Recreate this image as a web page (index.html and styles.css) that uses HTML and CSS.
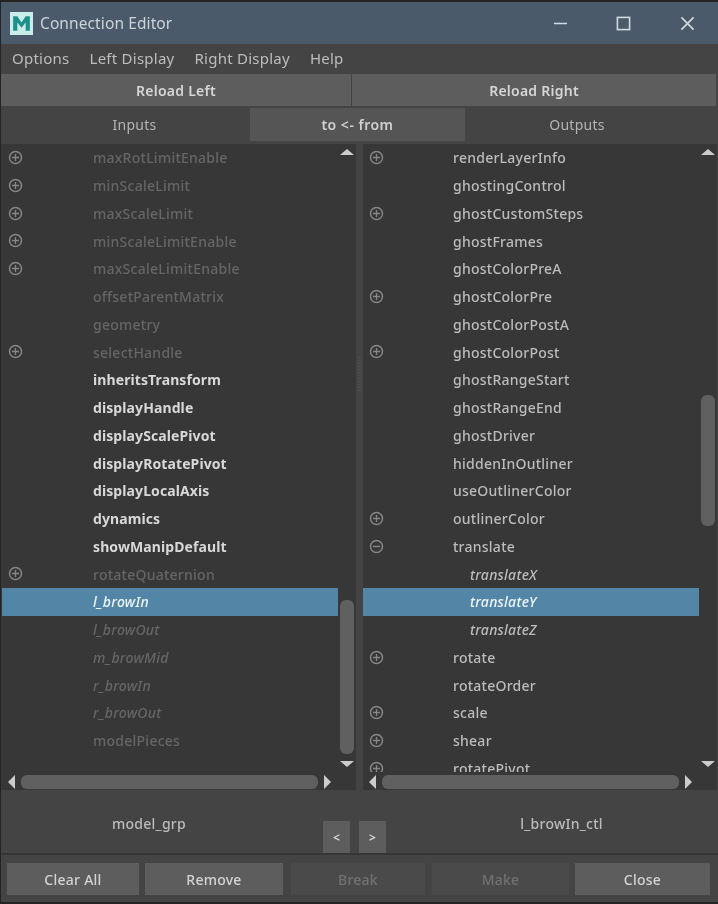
FILE: index.html
```html
<!DOCTYPE html>
<html lang="en">
<head>
<meta charset="utf-8">
<title>Connection Editor</title>
<link rel="stylesheet" href="styles.css">
</head>
<body>
<svg class="defs" width="0" height="0" aria-hidden="true">
  <symbol id="plus" viewBox="0 0 14 14"><circle cx="7" cy="7" r="5.6" fill="none" stroke="currentColor" stroke-width="1.4"/><path d="M3.8 7h6.4M7 3.8v6.4" stroke="currentColor" stroke-width="1.2"/></symbol>
  <symbol id="minus" viewBox="0 0 14 14"><circle cx="7" cy="7" r="5.6" fill="none" stroke="currentColor" stroke-width="1.4"/><path d="M3.8 7h6.4" stroke="currentColor" stroke-width="1.4"/></symbol>
</svg>
<div class="window">
  <header class="titlebar">
    <svg class="logo" viewBox="0 0 22 22"><rect width="22" height="22" fill="#c9eee9"/><path d="M3 18V4h4l4 6 4-6h4v14h-4v-8l-4 5-4-5v8z" fill="#1f8f8c"/></svg>
    <span class="title">Connection Editor</span>
    <div class="controls">
      <svg class="ctl ctl-min" viewBox="0 0 16 16"><path d="M1 8h14" stroke="#d4dbe0" stroke-width="1.6"/></svg>
      <svg class="ctl ctl-max" viewBox="0 0 16 16"><rect x="1.5" y="1.5" width="13" height="13" fill="none" stroke="#d4dbe0" stroke-width="1.7"/></svg>
      <svg class="ctl ctl-close" viewBox="0 0 16 16"><path d="M1.5 1.5l13 13M14.500 1.500l-13 13" stroke="#d4dbe0" stroke-width="1.7"/></svg>
    </div>
  </header>
  <nav class="menubar">
    <span>Options</span><span>Left Display</span><span>Right Display</span><span>Help</span>
  </nav>
  <div class="reload">
    <div class="reload-btn left">Reload Left</div>
    <div class="reload-btn right">Reload Right</div>
  </div>
  <div class="tabs">
    <div class="tab tab-in">Inputs</div>
    <div class="tab tab-mid">to &lt;- from</div>
    <div class="tab tab-out">Outputs</div>
  </div>
  <div class="panes">
    <section class="pane pane-left">
      <div class="rows">
        <div class="row dim"><svg class="ico"><use href="#plus"/></svg><span>maxRotLimitEnable</span></div>
        <div class="row dim"><svg class="ico"><use href="#plus"/></svg><span>minScaleLimit</span></div>
        <div class="row dim"><svg class="ico"><use href="#plus"/></svg><span>maxScaleLimit</span></div>
        <div class="row dim"><svg class="ico"><use href="#plus"/></svg><span>minScaleLimitEnable</span></div>
        <div class="row dim"><svg class="ico"><use href="#plus"/></svg><span>maxScaleLimitEnable</span></div>
        <div class="row dim"><span>offsetParentMatrix</span></div>
        <div class="row dim"><span>geometry</span></div>
        <div class="row dim"><svg class="ico"><use href="#plus"/></svg><span>selectHandle</span></div>
        <div class="row bold"><span>inheritsTransform</span></div>
        <div class="row bold"><span>displayHandle</span></div>
        <div class="row bold"><span>displayScalePivot</span></div>
        <div class="row bold"><span>displayRotatePivot</span></div>
        <div class="row bold"><span>displayLocalAxis</span></div>
        <div class="row bold"><span>dynamics</span></div>
        <div class="row bold"><span>showManipDefault</span></div>
        <div class="row dim"><svg class="ico"><use href="#plus"/></svg><span>rotateQuaternion</span></div>
        <div class="row sel"><span>l_browIn</span></div>
        <div class="row dim ital"><span>l_browOut</span></div>
        <div class="row dim ital"><span>m_browMid</span></div>
        <div class="row dim ital"><span>r_browIn</span></div>
        <div class="row dim ital"><span>r_browOut</span></div>
        <div class="row dim"><span>modelPieces</span></div>
      </div>
      <div class="vbar">
        <i class="arrow up"></i>
        <div class="vtrack"><div class="vthumb thumb-left"></div></div>
        <i class="arrow down"></i>
      </div>
      <div class="hbar">
        <i class="arrow lt"></i>
        <div class="hthumb"></div>
        <i class="arrow rt"></i>
      </div>
    </section>
    <div class="sash"><div class="grip"></div></div>
    <section class="pane pane-right">
      <div class="rows">
        <div class="row"><svg class="ico"><use href="#plus"/></svg><span>renderLayerInfo</span></div>
        <div class="row"><span>ghostingControl</span></div>
        <div class="row"><svg class="ico"><use href="#plus"/></svg><span>ghostCustomSteps</span></div>
        <div class="row"><span>ghostFrames</span></div>
        <div class="row"><span>ghostColorPreA</span></div>
        <div class="row"><svg class="ico"><use href="#plus"/></svg><span>ghostColorPre</span></div>
        <div class="row"><span>ghostColorPostA</span></div>
        <div class="row"><svg class="ico"><use href="#plus"/></svg><span>ghostColorPost</span></div>
        <div class="row"><span>ghostRangeStart</span></div>
        <div class="row"><span>ghostRangeEnd</span></div>
        <div class="row"><span>ghostDriver</span></div>
        <div class="row"><span>hiddenInOutliner</span></div>
        <div class="row"><span>useOutlinerColor</span></div>
        <div class="row"><svg class="ico"><use href="#plus"/></svg><span>outlinerColor</span></div>
        <div class="row"><svg class="ico"><use href="#minus"/></svg><span>translate</span></div>
        <div class="row child"><span>translateX</span></div>
        <div class="row child sel"><span>translateY</span></div>
        <div class="row child"><span>translateZ</span></div>
        <div class="row"><svg class="ico"><use href="#plus"/></svg><span>rotate</span></div>
        <div class="row"><span>rotateOrder</span></div>
        <div class="row"><svg class="ico"><use href="#plus"/></svg><span>scale</span></div>
        <div class="row"><svg class="ico"><use href="#plus"/></svg><span>shear</span></div>
        <div class="row"><svg class="ico"><use href="#plus"/></svg><span>rotatePivot</span></div>
      </div>
      <div class="vbar">
        <i class="arrow up"></i>
        <div class="vtrack"><div class="vthumb thumb-right"></div></div>
        <i class="arrow down"></i>
      </div>
      <div class="hbar">
        <i class="arrow lt"></i>
        <div class="hthumb"></div>
        <i class="arrow rt"></i>
      </div>
    </section>
  </div>
  <div class="status">
    <div class="node node-left">model_grp</div>
    <div class="swap"><div class="swap-btn">&lt;</div><div class="swap-btn">&gt;</div></div>
    <div class="node node-right">l_browIn_ctl</div>
  </div>
  <footer class="actions">
    <div class="btn b-clear">Clear All</div>
    <div class="btn b-remove">Remove</div>
    <div class="btn b-break off">Break</div>
    <div class="btn b-make off">Make</div>
    <div class="btn b-close">Close</div>
  </footer>
</div>
</body>
</html>
```
FILE: styles.css
```css
* { box-sizing: border-box; }
html, body { margin: 0; padding: 0; background: #222; }
.defs { position: absolute; }
.window {
  width: 718px;
  height: 904px;
  padding: 2px 2px 2px 1px;
  background: #242424;
  display: flex;
  flex-direction: column;
  font-family: "Noto Sans", "Open Sans", "Liberation Sans", sans-serif;
  font-size: 14px;
  letter-spacing: 0.25px;
  color: #c2c2c2;
  filter: blur(0.6px);
  overflow: hidden;
}
.titlebar {
  height: 42px;
  flex: none;
  background: #4a5a6b;
  display: flex;
  align-items: center;
  padding-left: 9px;
  margin-right: -2px;
}
.logo { width: 23px; height: 23px; flex: none; }
.title { margin-left: 7px; font-size: 15.500px; letter-spacing: 0.1px; color: #ccd3d8; }
.controls { margin-left: auto; display: flex; align-items: center; padding-right: 23px; }
.ctl { width: 15px; height: 15px; display: block; }
.ctl-max { margin-left: 48px; }
.ctl-close { margin-left: 49px; }
.menubar {
  height: 30px;
  flex: none;
  background: #444;
  display: flex;
  align-items: center;
  gap: 20px;
  padding: 0 0 3px 11px;
  margin-right: -2px;
  font-size: 15px;
  color: #bdbdbd;
}
.reload { height: 34px; flex: none; background: #444; display: flex; margin-right: -2px; padding: 0 2px 2px 0; }
.reload-btn {
  background: #5d5d5d;
  display: flex;
  align-items: center;
  justify-content: center;
  font-weight: 600;
  color: #d6d6d6;
}
.reload-btn.left { width: 350px; margin-right: 1px; }
.reload-btn.right { flex: 1; }
.tabs { height: 36px; flex: none; background: #444; display: flex; padding-bottom: 3px; margin-right: -2px; }
.tab { display: flex; align-items: center; justify-content: center; }
.tab-in { width: 249px; padding-left: 18px; color: #b4b4b4; }
.tab-mid { width: 215px; background: #555; color: #d0d0d0; font-weight: 600; letter-spacing: 0.5px; }
.tab-out { flex: 1; padding-right: 29px; color: #b4b4b4; }
.panes { height: 646px; flex: none; background: #444; display: flex; margin-right: -2px; }
.pane {
  flex: none;
  display: grid;
  grid-template-columns: 1fr 18px;
  grid-template-rows: 1fr 18px;
  background: #373737;
  overflow: hidden;
}
.pane-left { width: 355px; padding-left: 1px; }
.pane-right { width: 354px; }
.sash { width: 7px; flex: none; display: flex; flex-direction: column; align-items: center; padding-top: 213px; }
.grip { width: 3px; height: 34px; background: repeating-linear-gradient(#505050 0 1px, #464646 1px 3px); }
.rows { overflow: hidden; min-width: 0; }
.row {
  height: 27.760px;
  display: flex;
  align-items: center;
  position: relative;
  padding-left: 91px;
  white-space: nowrap;
  font-weight: 500;
  color: #bcbcbc;
}
.row.dim { color: #666; }
.row.bold { color: #d8d8d8; font-weight: 700; letter-spacing: 0.1px; }
.row.ital, .row.sel, .row.child { font-style: italic; font-weight: 500; }
.row.sel { background: #5285a6; color: #eef6fb; }
.row.child { padding-left: 107px; }
.ico { position: absolute; left: 6px; top: 6px; width: 15px; height: 15px; color: #878787; }
.pane-right .ico { left: 6px; }
.pane-right .row { padding-left: 90px; }
.pane-right .row.child { padding-left: 107px; }
.vbar { display: flex; flex-direction: column; align-items: center; padding: 5px 0 5px; }
.vtrack { flex: 1; width: 100%; padding: 0 2px; display: flex; flex-direction: column; }
.vthumb { background: #606060; border-radius: 6px; width: 14px; }
.thumb-left { margin-top: 445px; height: 154px; }
.thumb-right { margin-top: 240px; height: 131px; }
.hbar {
  grid-column: 1 / 3;
  display: flex;
  align-items: center;
  padding: 2px 25px 0 6px;
  gap: 6px;
}
.hthumb { flex: 1; height: 14px; border-radius: 6px; background: #606060; }
.arrow { width: 0; height: 0; display: block; flex: none; border-style: solid; border-color: transparent; }
.arrow.up { border-width: 0 7px 6px; border-bottom-color: #ccc; }
.arrow.down { border-width: 6px 7px 0; border-top-color: #ccc; }
.arrow.lt { border-width: 7px 7px 7px 0; border-right-color: #ccc; }
.arrow.rt { border-width: 7px 0 7px 7px; border-left-color: #ccc; }
.status {
  height: 65px;
  flex: none;
  background: #444;
  display: flex;
  margin-right: -2px;
  border-bottom: 2px solid #353535;
}
.node { font-weight: 500; color: #bcbcbc; padding-top: 24px; text-align: center; }
.node-left { width: 322px; padding-right: 26px; }
.node-right { flex: 1; padding-right: 24px; padding-left: 42px; }
.swap { display: flex; gap: 9px; padding-top: 31px; width: 64px; flex: none; }
.swap-btn {
  width: 27px;
  height: 32px;
  background: #5d5d5d;
  display: flex;
  align-items: center;
  justify-content: center;
  font-weight: 700;
  font-size: 12px;
  color: #d6d6d6;
}
.actions { flex: 1; background: #444; display: flex; padding: 8px 0 0 6px; margin-right: -2px; }
.btn {
  height: 32px;
  background: #5d5d5d;
  display: flex;
  align-items: center;
  justify-content: center;
  font-weight: 500;
  color: #d4d4d4;
}
.btn.off { background: #4a4a4a; color: #727272; }
.b-clear { width: 132px; margin-right: 6px; }
.b-remove { width: 138px; margin-right: 8px; }
.b-break { width: 134px; margin-right: 7px; }
.b-make { width: 137px; margin-right: 6px; }
.b-close { width: 135px; }
```
